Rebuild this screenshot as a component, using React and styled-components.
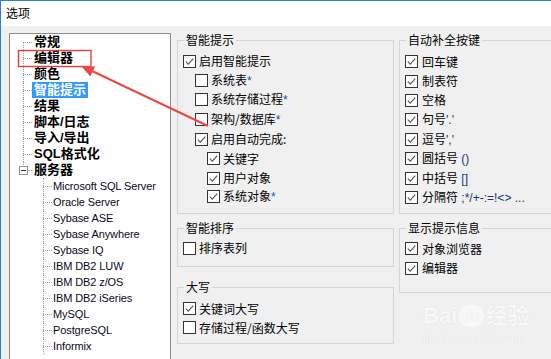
import React from "react";
import { styled, createGlobalStyle } from "styled-components";

const GlobalStyle = createGlobalStyle`
  html, body {
    margin: 0;
    padding: 0;
    background: #f0f0f0;
    overflow: hidden;
  }
  #root {
    width: 551px;
    height: 359px;
  }
`;

const treeTop = [
  { label: "常规" },
  { label: "编辑器" },
  { label: "颜色" },
  { label: "智能提示", selected: true },
  { label: "结果" },
  { label: "脚本/日志" },
  { label: "导入/导出" },
  { label: "SQL格式化" },
  { label: "服务器", expand: true },
];

const treeChildren = [
  "Microsoft SQL Server",
  "Oracle Server",
  "Sybase ASE",
  "Sybase Anywhere",
  "Sybase IQ",
  "IBM DB2 LUW",
  "IBM DB2 z/OS",
  "IBM DB2 iSeries",
  "MySQL",
  "PostgreSQL",
  "Informix",
];

const hintItems = [
  { label: "启用智能提示", checked: true, level: 0, h: 18 },
  { label: "系统表", star: true, level: 1, h: 20 },
  { label: "系统存储过程", star: true, level: 1, h: 18 },
  { label: "架构/数据库", star: true, level: 1, h: 22 },
  { label: "启用自动完成:", checked: true, level: 1, h: 18 },
  { label: "关键字", checked: true, level: 2, h: 21 },
  { label: "用户对象", checked: true, level: 2, h: 18 },
  { label: "系统对象", checked: true, star: true, level: 2, h: 18 },
];

const keyItems = [
  { label: "回车键" },
  { label: "制表符" },
  { label: "空格" },
  { label: "句号", sym: "'.'" },
  { label: "逗号", sym: "','" },
  { label: "圆括号", sym: " ()" },
  { label: "中括号", sym: " []" },
  { label: "分隔符", sym: " ;*/+-:=!<> ..." },
];

function CheckBox({ checked }) {
  return (
    <Box>
      {checked && (
        <svg width="11" height="11" viewBox="0 0 11 11">
          <polyline
            points="1.8,5.6 4.3,8.1 9.2,2.6"
            fill="none"
            stroke="#5a5a5a"
            strokeWidth="1.2"
          />
        </svg>
      )}
    </Box>
  );
}

function Check(props) {
  const { label, checked, star, sym, level = 0, h = 18, gap = 3 } = props;
  return (
    <CheckRow $h={h} $level={level}>
      <CheckBox checked={checked} />
      <CheckText $gap={gap}>
        {label}
        {star && <Star>*</Star>}
        {sym && <Sym>{sym}</Sym>}
      </CheckText>
    </CheckRow>
  );
}

function App() {
  return (
    <>
      <GlobalStyle />
      <Window>
        <TitleBar>选项</TitleBar>
        <Main>
          <Tree>
            {treeTop.map((item, i) => (
              <TreeRow key={item.label}>
                <Gutter
                  $level={0}
                  $first={i === 0}
                  $last={i === treeTop.length - 1}
                  $expand={item.expand}
                >
                  {item.expand && (
                    <ExpandBox>
                      <Minus />
                    </ExpandBox>
                  )}
                </Gutter>
                <TopLabel $selected={item.selected}>{item.label}</TopLabel>
              </TreeRow>
            ))}
            {treeChildren.map((name) => (
              <TreeRow key={name}>
                <Gutter $level={1} />
                <ChildLabel>{name}</ChildLabel>
              </TreeRow>
            ))}
          </Tree>

          <Column $w={217} $ml={6}>
            <Group $h={181} $pt={5}>
              <Legend>智能提示</Legend>
              {hintItems.map((item) => (
                <Check key={item.label} {...item} />
              ))}
            </Group>
            <Group $h={46} $pt={4} $mt={7}>
              <Legend>智能排序</Legend>
              <Check label="排序表列" />
            </Group>
            <Group $h={64} $pt={5} $mt={13}>
              <Legend>大写</Legend>
              <Check label="关键词大写" checked h={19} />
              <Check label="存储过程/函数大写" h={19} />
            </Group>
          </Column>

          <Column $w={180} $ml={5}>
            <Group $h={181} $pt={5}>
              <Legend>自动补全按键</Legend>
              {keyItems.map((item) => (
                <Check key={item.label} {...item} checked h={19.4} gap={4} />
              ))}
            </Group>
            <Group $h={72} $pt={4} $mt={7}>
              <Legend>显示提示信息</Legend>
              <Check label="对象浏览器" checked h={19.5} gap={4} />
              <Check label="编辑器" checked h={19.5} gap={4} />
            </Group>
          </Column>
        </Main>

        <Watermark>
          <WmMain>
            Bai<WmPaw>du</WmPaw>经验
          </WmMain>
          <WmSub>jingyan.baidu.com</WmSub>
        </Watermark>

        <Annotation width="551" height="359" viewBox="0 0 551 359">
          <rect
            x="18.5"
            y="50.5"
            width="72.5"
            height="16"
            fill="none"
            stroke="#e8413c"
            strokeWidth="1.4"
          />
          <line
            x1="208"
            y1="126"
            x2="92"
            y2="71"
            stroke="#ea4a44"
            strokeWidth="2.2"
          />
          <polygon points="81,66 90.4,76.5 95.1,66.6" fill="#ea4a44" />
        </Annotation>
      </Window>
    </>
  );
}

const Window = styled.div`
  position: relative;
  width: 551px;
  height: 359px;
  box-sizing: border-box;
  border-top: 1px solid #2a7fd6;
  border-left: 1px solid #2a7fd6;
  background: #f0f0f0;
  overflow: hidden;
  font-family: "Noto Sans CJK SC", "Liberation Sans", sans-serif;
  color: #000;
`;

const TitleBar = styled.div`
  height: 25px;
  padding-left: 5px;
  background: #fff;
  font-size: 12px;
  line-height: 24px;
`;

const Main = styled.div`
  display: flex;
  align-items: flex-start;
  padding: 7px 0 0 8px;
`;

const Tree = styled.div`
  width: 162px;
  height: 340px;
  box-sizing: border-box;
  border: 1px solid #8c8c8c;
  background: #fff;
  flex-shrink: 0;
  overflow: hidden;
`;

const TreeRow = styled.div`
  display: flex;
  align-items: center;
  height: 16px;
  white-space: nowrap;
`;

const Gutter = styled.span`
  position: relative;
  align-self: stretch;
  flex-shrink: 0;
  width: ${(p) => (p.$level === 0 ? 22 : 41)}px;

  &::before {
    content: "";
    position: absolute;
    left: ${(p) => (p.$level === 0 ? 13 : 33)}px;
    top: ${(p) => (p.$first ? 8 : 0)}px;
    height: ${(p) => (p.$expand ? 5 : p.$first ? 8 : 16)}px;
    border-left: 1px dotted #a0a0a0;
  }

  &::after {
    content: "";
    position: absolute;
    top: 8px;
    left: ${(p) => (p.$level === 0 ? (p.$expand ? 18 : 13) : 33)}px;
    width: ${(p) => (p.$expand ? 4 : 9)}px;
    border-top: 1px dotted #a0a0a0;
  }
`;

const ExpandBox = styled.span`
  position: absolute;
  left: 9px;
  top: 4px;
  width: 9px;
  height: 9px;
  box-sizing: border-box;
  border: 1px solid #919191;
  background: #fff;
  display: flex;
  align-items: center;
  justify-content: center;
  z-index: 1;
`;

const Minus = styled.span`
  width: 5px;
  height: 1px;
  background: #333;
`;

const TopLabel = styled.span`
  padding: 0 2px;
  height: 16px;
  font-size: 13px;
  font-weight: 700;
  line-height: 16px;
  font-family: "Liberation Sans", "Noto Sans CJK SC", sans-serif;
  background: ${(p) => (p.$selected ? "#3399ff" : "transparent")};
  color: ${(p) => (p.$selected ? "#fff" : "#000")};
`;

const ChildLabel = styled.span`
  padding: 0 2px;
  font-size: 11px;
  line-height: 16px;
  letter-spacing: -0.1px;
  font-family: "Liberation Sans", sans-serif;
  color: #0a0a1e;
`;

const Column = styled.div`
  display: flex;
  flex-direction: column;
  flex-shrink: 0;
  width: ${(p) => p.$w}px;
  margin-left: ${(p) => p.$ml}px;
`;

const Group = styled.fieldset`
  box-sizing: border-box;
  margin: ${(p) => p.$mt || 0}px 0 0;
  padding: ${(p) => p.$pt}px 5px 0 5px;
  height: ${(p) => p.$h}px;
  min-width: 0;
  border: 1px solid #d6d6d6;
`;

const Legend = styled.legend`
  margin-left: 1px;
  padding: 0 2px;
  font-size: 12px;
  line-height: 14px;
`;

const CheckRow = styled.div`
  display: flex;
  align-items: center;
  height: ${(p) => p.$h}px;
  padding-left: ${(p) => p.$level * 12}px;
  white-space: nowrap;
`;

const Box = styled.span`
  width: 13px;
  height: 13px;
  box-sizing: border-box;
  border: 1px solid #333;
  background: #fff;
  flex-shrink: 0;
  display: flex;
  align-items: center;
  justify-content: center;
`;

const CheckText = styled.span`
  margin-left: ${(p) => p.$gap}px;
  font-size: 12px;
  line-height: 16px;
`;

const Star = styled.span`
  color: #1a52a8;
  font-family: "Liberation Sans", sans-serif;
`;

const Sym = styled.span`
  color: #16307a;
  font-family: "Liberation Sans", sans-serif;
`;

const Watermark = styled.div`
  position: absolute;
  left: 422px;
  top: 300px;
  pointer-events: none;
  font-family: "Liberation Sans", "Noto Sans CJK SC", sans-serif;
  color: rgba(255, 255, 255, 0.85);
  text-shadow: 0 0 1px rgba(0, 0, 0, 0.12);
`;

const WmMain = styled.div`
  font-size: 22px;
  font-weight: 700;
  line-height: 30px;
  display: flex;
  align-items: center;
`;

const WmPaw = styled.span`
  margin: 0 2px;
  padding: 2px 3px;
  border-radius: 10px;
  background: rgba(255, 255, 255, 0.55);
  font-size: 15px;
  line-height: 18px;
`;

const WmSub = styled.div`
  font-size: 12px;
  line-height: 14px;
  letter-spacing: 0.3px;
`;

const Annotation = styled.svg`
  position: absolute;
  left: -1px;
  top: -1px;
  pointer-events: none;
`;

export default App;
